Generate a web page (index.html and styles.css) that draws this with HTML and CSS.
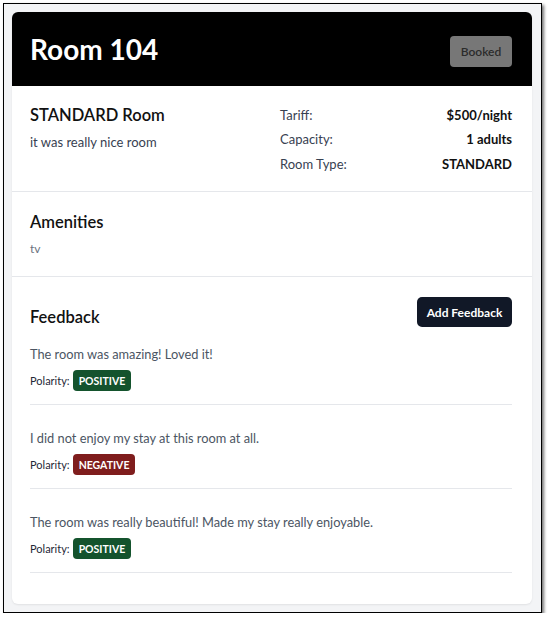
FILE: index.html
```html
<!DOCTYPE html>
<html>
<head>
<meta charset="utf-8">
<link rel="stylesheet" href="styles.css">
</head>
<body>
<div class="frame">
  <div class="card">
    <div class="header">
      <h1 class="title">Room 104</h1>
      <button class="booked">Booked</button>
    </div>
    <div class="section details">
      <div class="info">
        <h2 class="sub">STANDARD Room</h2>
        <p class="desc">it was really nice room</p>
      </div>
      <div class="specs">
        <div class="row"><span class="lbl">Tariff:</span><span class="val">$500/night</span></div>
        <div class="row"><span class="lbl">Capacity:</span><span class="val">1 adults</span></div>
        <div class="row"><span class="lbl">Room Type:</span><span class="val">STANDARD</span></div>
      </div>
    </div>
    <div class="section amen">
      <h2 class="sub">Amenities</h2>
      <p class="tag">tv</p>
    </div>
    <div class="section fb">
      <div class="fb-head">
        <h2 class="sub">Feedback</h2>
        <button class="add">Add Feedback</button>
      </div>
      <div class="list">
        <div class="item">
          <p class="text">The room was amazing! Loved it!</p>
          <div class="pol">Polarity: <span class="badge pos">POSITIVE</span></div>
        </div>
        <div class="item">
          <p class="text">I did not enjoy my stay at this room at all.</p>
          <div class="pol">Polarity: <span class="badge neg">NEGATIVE</span></div>
        </div>
        <div class="item">
          <p class="text">The room was really beautiful! Made my stay really enjoyable.</p>
          <div class="pol">Polarity: <span class="badge pos">POSITIVE</span></div>
        </div>
      </div>
    </div>
  </div>
</div>
</body>
</html>
```
FILE: styles.css
```css
* { box-sizing: border-box; }
html, body { margin: 0; padding: 0; background: #fff; }
body { font-family: Lato, "Open Sans", sans-serif; color: #111827; }
h1, h2, p { margin: 0; }

.frame {
  margin: 3px 0 0 3px;
  width: 539px;
  height: 610px;
  border: 1px solid #000;
  background: #f3f4f6;
  box-shadow: 2px 2px 3px rgba(0,0,0,0.55);
  padding: 8px 9px 8px 8px;
}
.card {
  background: #fff;
  border-radius: 6px;
  overflow: hidden;
  box-shadow: 0 1px 2px rgba(0,0,0,0.08);
  height: 592px;
}
.header {
  background: #000;
  height: 74px;
  display: flex;
  align-items: center;
  justify-content: space-between;
  padding: 0 20px 0 18px;
}
.title { color: #fff; font-size: 28px; font-weight: 700; }
.booked {
  background: #777;
  color: #2b2b2b;
  border: 0;
  border-radius: 4px;
  font-family: inherit;
  font-size: 12px;
  font-weight: 600;
  width: 62px;
  height: 31px;
  margin-top: 5px;
}
.section { border-bottom: 1px solid #e5e7eb; padding: 0 20px 0 18px; }
.details { display: flex; height: 106px; padding-top: 19px; }
.info { flex: 1; }
.sub { font-size: 16.5px; font-weight: 600; color: #111; }
.desc { font-size: 13px; color: #374151; margin-top: 9px; }
.specs { width: 232px; display: flex; flex-direction: column; gap: 6.25px; padding-top: 1px; }
.row { display: flex; justify-content: space-between; font-size: 13px; line-height: 18px; }
.lbl { color: #374151; }
.val { font-weight: 700; color: #111; }
.amen { height: 85px; padding-top: 20px; }
.tag { font-size: 12px; color: #6b7280; margin-top: 9px; }
.fb { border-bottom: 0; padding-top: 20px; }
.fb-head { display: flex; justify-content: space-between; align-items: flex-end; }
.fb-head .sub { margin-bottom: 2px; }
.add {
  background: #111827;
  color: #fff;
  border: 0;
  border-radius: 5px;
  font-family: inherit;
  font-size: 12px;
  font-weight: 700;
  width: 95px;
  height: 30px;
  margin-bottom: 2px;
}
.list { display: flex; flex-direction: column; gap: 25px; margin-top: 17px; }
.item { border-bottom: 1px solid #e5e7eb; padding: 0 0 13px; }
.text { font-size: 12.8px; color: #4b5563; }
.pol { font-size: 11px; color: #1f2937; margin-top: 8px; display: flex; align-items: center; gap: 3px; }
.badge { color: #fff; font-weight: 700; font-size: 10.5px; padding: 0 6px; height: 21px; display: inline-flex; align-items: center; border-radius: 4px; }
.pos { background: #14532d; }
.neg { background: #7f1d1d; }
```
